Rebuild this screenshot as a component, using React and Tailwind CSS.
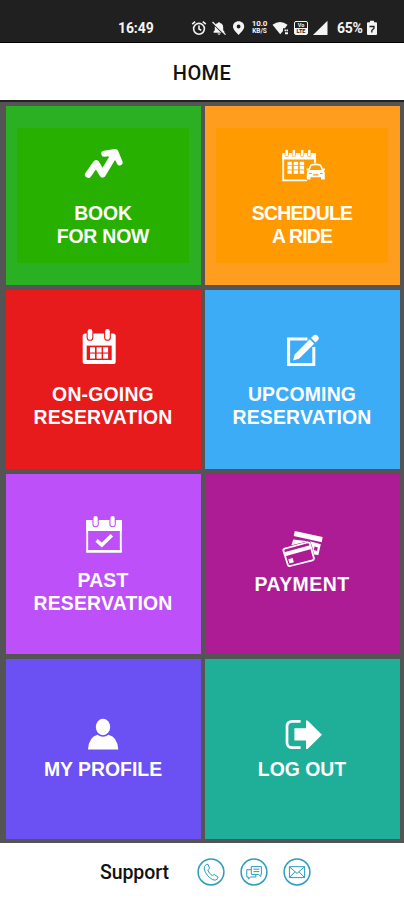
const TILES = [
  { lines: ["BOOK", "FOR NOW"], icon: TrendIcon, tile: "bg-[#2bb024] pt-[40px]", inset: "bg-[#28b000]", tracking: "tracking-[-0.2px]" },
  { lines: ["SCHEDULE", "A RIDE"], icon: ScheduleIcon, tile: "bg-[#ff9d1e] pt-[40px]", inset: "bg-[#ff9b00]", tracking: "tracking-[-0.8px]" },
  { lines: ["ON-GOING", "RESERVATION"], icon: OngoingIcon, tile: "bg-[#e71b1b] pt-[37px]", tracking: "tracking-[0.2px]" },
  { lines: ["UPCOMING", "RESERVATION"], icon: EditIcon, tile: "bg-[#3dacf7] pt-[37px]", tracking: "tracking-[0.2px]" },
  { lines: ["PAST", "RESERVATION"], icon: PastIcon, tile: "bg-[#bd50f8] pt-[39px]", tracking: "tracking-[0.2px]" },
  { lines: ["PAYMENT"], icon: CardsIcon, tile: "bg-[#ad1c95] pt-[43px]", tracking: "tracking-[0.5px]" },
  { lines: ["MY PROFILE"], icon: ProfileIcon, tile: "bg-[#6b50f4] pt-[43px]", tracking: "tracking-normal" },
  { lines: ["LOG OUT"], icon: LogoutIcon, tile: "bg-[#1fae98] pt-[43px]", tracking: "tracking-normal" },
];

function TileSvg({ children }) {
  return (
    <svg className="relative block h-[56px] w-[60px] shrink-0" viewBox="0 0 60 56" fill="white">
      {children}
    </svg>
  );
}

function TrendIcon() {
  return (
    <TileSvg>
      <g fill="none" stroke="white" strokeWidth="6.6" strokeLinecap="round" strokeLinejoin="round">
        <path d="M15.3 28.6 L23.2 17.4 L29.5 28.2 L40.5 10" />
        <path d="M31.3 7.8 L42.3 6 L46.6 16.4" strokeWidth="6" />
      </g>
      <path d="M31 8 L43 5 L47 17 Z" />
    </TileSvg>
  );
}

function ScheduleIcon() {
  return (
    <TileSvg>
      <path d="M11.2 8 H43 V18 M35 34.4 H11.2 V8" fill="none" stroke="white" strokeWidth="1.8" />
      <path d="M10.3 7.3 H43.8 V13.5 H10.3 Z" />
      {[14.7, 21.8, 30.2, 37.3].map((x) => (
        <g key={x}>
          <rect x={x - 2} y="3" width="4" height="8" rx="2" fill="#ff9b00" />
          <rect x={x - 1.3} y="3.8" width="2.6" height="6.7" rx="1.3" />
        </g>
      ))}
      {[15.5, 21.7, 27.7].map((x) => (
        <g key={x}>
          <rect x={x} y="15.8" width="4.4" height="3.5" />
          <rect x={x} y="20" width="4.4" height="3.5" />
          <rect x={x} y="24.3" width="4.4" height="3.5" />
        </g>
      ))}
      <path d="M35 25 L37.5 18.3 Q44 15 50.5 18.3 L53 25 V34 H34 V25 Z" fill="#ff9b00" />
      <path d="M36.8 24.5 L38.8 19.3 Q43.6 17.5 48.6 19.3 L50.7 24.5" fill="none" stroke="white" strokeWidth="1.6" />
      <path d="M34.5 22.4 H37 V24 H50.5 V22.4 H53 V24 L51.8 24.8 Q52.8 26 52.8 27.5 V33.4 H49 V31.3 H38.5 V33.4 H34.8 V27.5 Q34.8 26 35.8 24.8 L34.5 24 Z" />
      <path d="M37 27.5 H39.6 M48 27.5 H50.6 M41 28.8 H46.6" stroke="#ff9b00" strokeWidth="1.2" />
    </TileSvg>
  );
}

function OngoingIcon() {
  return (
    <TileSvg>
      <rect x="9.7" y="6.5" width="33" height="30.5" rx="2.6" />
      {[17, 34.5].map((x) => (
        <g key={x}>
          <rect x={x - 3.4} y="1" width="6.8" height="12.8" rx="3.4" fill="#e71b1b" />
          <rect x={x - 2.3} y="2" width="4.6" height="10.8" rx="2.3" />
        </g>
      ))}
      <rect x="13.7" y="18.6" width="25" height="14.4" fill="#e71b1b" />
      {[17, 23.6, 30.1].map((x) => (
        <g key={x}>
          <rect x={x} y="20.3" width="5" height="5.2" />
          <rect x={x} y="26.6" width="5" height="5" />
        </g>
      ))}
    </TileSvg>
  );
}

function EditIcon() {
  return (
    <TileSvg>
      <path d="M35.5 12 H16.6 V37.5 H41.8 V20" fill="none" stroke="white" strokeWidth="3" />
      <path d="M21 33.5 L22.7 27.5 L37.7 12.3 L42.2 16.8 L27 31.8 Z" />
      <path d="M39 11 L41.4 8.6 Q43.6 6.7 45.8 8.9 Q47.8 11 46 13 L43.6 15.5 Z" />
    </TileSvg>
  );
}

function PastIcon() {
  return (
    <TileSvg>
      <path d="M14.2 8 H47.8 V38.6 H14.2 Z" fill="none" stroke="white" strokeWidth="1.9" />
      <path d="M13.3 7 H48.8 V18 H13.3 Z M13.3 37 H48.8 V39.6 H13.3 Z" />
      {[22.6, 39.6].map((x) => (
        <g key={x}>
          <rect x={x - 3.2} y="1" width="6.4" height="13.3" rx="3.2" fill="#bd50f8" />
          <rect x={x - 2.1} y="3" width="4.2" height="10.3" rx="2.1" />
        </g>
      ))}
      <path d="M23.6 27.3 L28.8 32 L38.8 22.3" fill="none" stroke="white" strokeWidth="3.6" />
    </TileSvg>
  );
}

function CardsIcon() {
  return (
    <TileSvg>
      <path d="M22.8 14 L50.6 20 L49.8 25.2 L21.7 19 Z" />
      <path d="M21.3 22.5 L36 24.2 L19.4 28.3 Z" />
      <path d="M38 24.2 L48.8 27.2 L46.4 38 L42 37.6 L40 29 Z" />
      <path d="M42.6 29.6 L45.8 30.4 L45 33.9 L41.8 33.1 Z" fill="#ad1c95" />
      <path d="M12.7 31.6 L35.3 25.5 Q37.4 25 38 27 L41.8 40.8 Q42.3 42.8 40.3 43.4 L18.3 49 Q16.3 49.5 15.7 47.5 L11.5 34 Q11 32.1 12.7 31.6 Z" fill="#ad1c95" stroke="white" strokeWidth="1.8" />
      <path d="M12.2 35.3 L38.2 28.3 L39.2 32.1 L13.4 39.2 Z" />
      <path d="M16.3 42.3 L20.6 41.1 L21.9 45.2 L17.5 46.4 Z" />
    </TileSvg>
  );
}

function ProfileIcon() {
  return (
    <TileSvg>
      <ellipse cx="30" cy="25" rx="7.2" ry="8.3" />
      <path d="M24.5 32.8 Q30 36.7 35.5 32.8 Q44.5 34.8 45.3 47.6 H15 Q15.8 34.8 24.5 32.8 Z" />
    </TileSvg>
  );
}

function LogoutIcon() {
  return (
    <TileSvg>
      <path d="M28.6 19.3 H20.5 Q15 19.3 15 24.5 V40.5 Q15 45.7 20.5 45.7 H28.6" fill="none" stroke="white" strokeWidth="2.7" />
      <path d="M22.4 26.3 H34 V18.5 L35.5 18.5 L50 32.7 L35.5 47 L34 47 V38.6 H22.4 Z" />
    </TileSvg>
  );
}

function Tile({ lines, icon: Icon, tile, inset, tracking }) {
  return (
    <button className={`relative flex flex-col items-center pr-px ${tile}`}>
      {inset && <span className={`absolute top-[22px] left-[11px] h-[135px] w-[172px] ${inset}`} />}
      <Icon />
      <span
        className={`relative text-center font-['Liberation_Sans',Arial,sans-serif] text-[19.4px] leading-[23px] font-bold whitespace-nowrap text-white ${tracking}`}
      >
        {lines.map((line) => (
          <span key={line} className="block">
            {line}
          </span>
        ))}
      </span>
    </button>
  );
}

function StatusBar() {
  return (
    <div className="flex h-[43px] items-center border-b border-black bg-[#202020] pt-[13px] pl-[118px] text-[#f4f4f4]">
      <span className="w-[73px] text-[14px] leading-4 font-bold tracking-[-0.1px]">16:49</span>

      {/* alarm */}
      <svg className="mr-[4px] h-4 w-4" viewBox="0 0 16 16" fill="none" stroke="currentColor" strokeWidth="1.6">
        <circle cx="8" cy="8.8" r="5.4" />
        <path d="M8 5.5 V9 L10.3 10.4 M1.2 4.2 L4.2 1.7 M14.8 4.2 L11.8 1.7" />
      </svg>

      {/* muted bell */}
      <svg className="mr-[4px] h-4 w-4" viewBox="0 0 16 16">
        <path d="M2.6 12.8 V11.5 L3.8 10.2 V7.2 Q3.8 3.8 7 3 Q8 0.8 9 3 Q12.2 3.8 12.2 7.2 V10.2 L13.4 11.5 V12.8 Z M6.3 13.5 H9.7 Q8 16.2 6.3 13.5 Z" fill="currentColor" />
        <path d="M2.2 3.8 L13.4 15" stroke="#202020" strokeWidth="1.1" />
        <path d="M1.5 2 L14.5 14.6" stroke="currentColor" strokeWidth="1.3" />
      </svg>

      {/* location */}
      <svg className="mr-[4px] h-4 w-4" viewBox="0 0 16 16" fill="currentColor" fillRule="evenodd">
        <path d="M7.6 1.2 C11 1.2 13.2 3.6 13.2 6.5 C13.2 9.6 9.8 12.6 7.6 15 C5.4 12.6 2 9.6 2 6.5 C2 3.6 4.2 1.2 7.6 1.2 Z M7.6 4.6 A1.9 1.9 0 1 0 7.6 8.4 A1.9 1.9 0 1 0 7.6 4.6 Z" />
      </svg>

      <span className="mr-[4px] flex w-[17px] flex-col items-center text-[8px] leading-[8px] font-bold">
        <span className="tracking-[-0.1px]">10.0</span>
        <span className="text-[6.5px] leading-[7px]">KB/S</span>
      </span>

      {/* wifi */}
      <svg className="mr-[5px] h-4 w-[17px]" viewBox="0 0 17 16" fill="currentColor">
        <path d="M0.5 4.8 Q8 -1 15.5 4.8 L13 8.2 H11 V11 L8.2 14.3 Z" />
        <path d="M12.6 9.4 H14.2 V11.2 H12.6 Z M14.6 9.4 H16 V11.2 H14.6 Z M13 12.2 H16 V14.2 H13 Z" />
      </svg>

      {/* volte */}
      <span className="mr-[5px] flex h-[14px] w-[14px] flex-col items-center rounded-[2px] border border-[#f4f4f4] text-[5.5px] leading-[6px] font-bold">
        <span>Vo</span>
        <span className="w-full bg-[#f4f4f4] text-center text-[#202020]">LTE</span>
      </span>

      <svg className="h-4 w-[15px]" viewBox="0 0 15 16" fill="currentColor">
        <path d="M0 15 L14.5 0.8 V15 Z" />
      </svg>
      <span className="ml-[9px] w-[27px] text-[14px] leading-4 font-bold tracking-[-0.3px]">65%</span>

      {/* battery */}
      <svg className="ml-[2px] h-4 w-[12px]" viewBox="0 0 12 16">
        <path d="M4 0.8 H8 V2.3 H10 Q11 2.3 11 3.3 V14 Q11 15 10 15 H2 Q1 15 1 14 V3.3 Q1 2.3 2 2.3 H4 Z" fill="currentColor" />
        <path d="M3.5 6.5 H8 V8.3 L5.8 10.5 V12.5" fill="none" stroke="#202020" strokeWidth="1.3" />
      </svg>
    </div>
  );
}

function SupportIcon({ children }) {
  return (
    <svg className="h-7 w-7" viewBox="0 0 28 28" fill="none" stroke="#2b9dbb" strokeWidth="1" strokeLinejoin="round">
      <circle cx="14" cy="14" r="12.9" strokeWidth="1.5" />
      {children}
    </svg>
  );
}

export default function App() {
  return (
    <div className="flex h-[900px] w-[404px] flex-col overflow-hidden bg-white font-[Roboto,sans-serif]">
      <StatusBar />

      <header className="flex h-[57px] items-center justify-center pt-[2px] text-[20px] font-medium tracking-[0.4px] text-[#111]">
        HOME
      </header>

      <main className="grid h-[743px] grid-cols-[195px_195px] grid-rows-[179px_179px_180px_180px] gap-x-[4px] gap-y-[5px] border-t-2 border-[#222] bg-[#545454] pt-[4px] pl-[6px]">
        {TILES.map((t) => (
          <Tile key={t.lines.join(" ")} {...t} />
        ))}
      </main>

      <footer className="flex h-[57px] items-center pl-[100px]">
        <span className="w-[97px] pt-[2px] text-[19.5px] leading-6 font-medium tracking-[-0.1px] text-[#111]">Support</span>
        <div className="flex gap-[15px]">
          <SupportIcon>
            <path d="M9.2 6.7 L11 6.3 L12.6 10.3 L10.7 12 Q12 15.5 15.3 17.7 L17.4 16.5 L21 19.2 L20.2 21.2 Q18.4 23 15.6 21.6 Q9 18 7.2 11 Q6.7 8 9.2 6.7 Z" />
          </SupportIcon>
          <SupportIcon>
            <path d="M11.3 8.6 H21.4 V16.4 H20.8 V18.5 L18.5 16.4 H11.3 Z" />
            <path d="M11.3 11.7 H6.8 V19 H8.3 V21 L10.7 19 H15.8 V16.4 M13.5 11.2 H19.3 M13.5 13.6 H19.3" />
          </SupportIcon>
          <SupportIcon>
            <path d="M6.4 8.7 H21.6 V19.6 H6.4 Z M6.4 8.7 L14 15.4 L21.6 8.7 M6.4 19.6 L12 13.8 M21.6 19.6 L16 13.8" />
          </SupportIcon>
        </div>
      </footer>
    </div>
  );
}
